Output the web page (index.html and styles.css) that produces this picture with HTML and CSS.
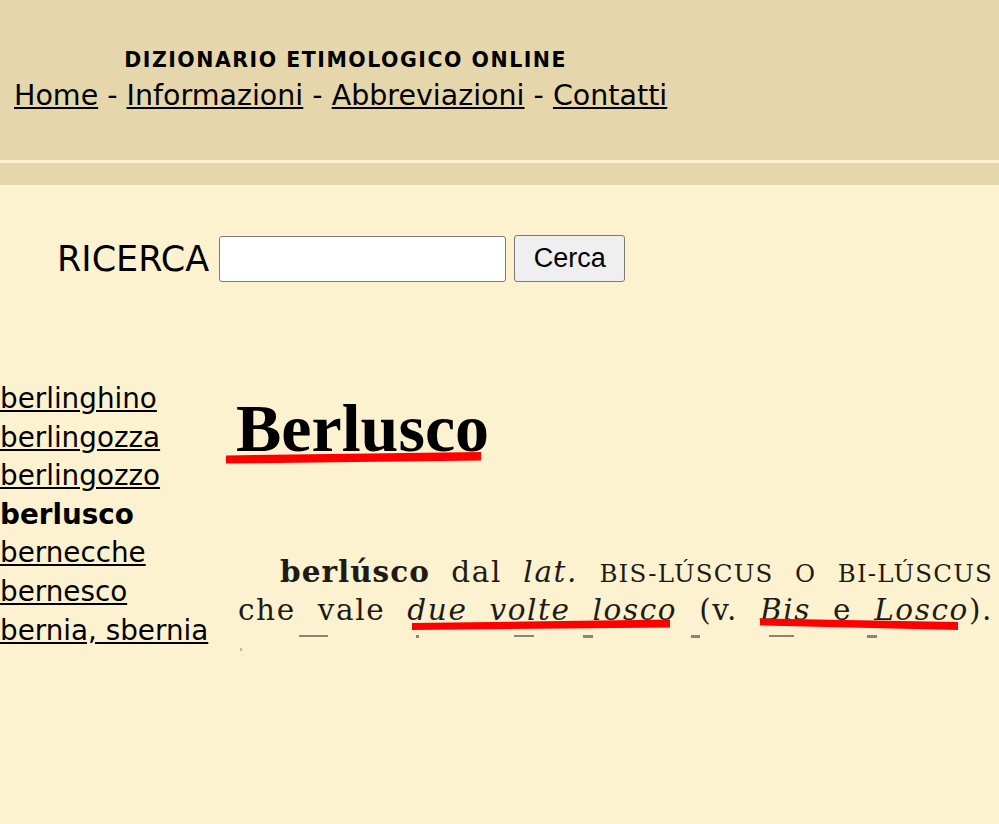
FILE: index.html
```html
<!DOCTYPE html>
<html lang="it">
<head>
<meta charset="utf-8">
<title>Dizionario Etimologico Online - Berlusco</title>
<link rel="stylesheet" href="styles.css">
</head>
<body>
<header class="top">
  <div class="top-inner">
    <div class="site-title">DIZIONARIO ETIMOLOGICO ONLINE</div>
    <nav class="nav"><a href="#">Home</a> - <a href="#">Informazioni</a> - <a href="#">Abbreviazioni</a> - <a href="#">Contatti</a></nav>
  </div>
</header>
<div class="sep"></div>
<div class="band"></div>
<main class="content">
  <form class="search" onsubmit="return false">
    <label class="search-label" for="q">RICERCA</label>
    <input class="search-input" id="q" type="text">
    <button class="search-btn" type="submit">Cerca</button>
  </form>
  <div class="entry">
    <aside class="side">
      <a href="#">berlinghino</a>
      <a href="#">berlingozza</a>
      <a href="#">berlingozzo</a>
      <b class="current">berlusco</b>
      <a href="#">bernecche</a>
      <a href="#">bernesco</a>
      <a href="#">bernia, sbernia</a>
    </aside>
    <section class="def">
      <h1 class="headword">Berlusco</h1>
      <div class="scan">
        <div class="line l1"><b>berlúsco</b> dal <i>lat.</i> <span class="sc">BIS-LÚSCUS</span> <span class="sc">O</span> <span class="sc">BI-LÚSCUS</span></div>
        <div class="line">che vale <i>due volte losco</i> (v. <i>Bis</i> e <i>Losco</i>).</div>
        <div class="frags" aria-hidden="true">
          <span class="frag f1"></span>
          <span class="frag f2"></span>
          <span class="frag f3"></span>
          <span class="frag f4"></span>
          <span class="frag f5"></span>
          <span class="frag f6"></span>
          <span class="frag f7"></span>
        </div>
        <div class="speck" aria-hidden="true"></div>
      </div>
      <svg class="marks" viewBox="0 0 773 280" width="773" height="280" aria-hidden="true">
        <polygon points="0,75.5 255,72 255,80.5 0,83.5" fill="#f00"/>
        <polygon points="186,243 444,239.5 444,247.5 186,250" fill="#f00"/>
        <polygon points="534,238.5 732,242 732,250 534,245.5" fill="#f00"/>
      </svg>
    </section>
  </div>
</main>
</body>
</html>
```
FILE: styles.css
```css
html, body {
  margin: 0;
  padding: 0;
}
body {
  background: #fdf2cf;
  font-family: "DejaVu Sans", Verdana, sans-serif;
  color: #000;
  min-height: 824px;
}
a {
  color: #000;
}
.top {
  background: #e5d7ab;
  height: 160px;
  box-sizing: border-box;
  padding-top: 48px;
}
.top-inner {
  display: inline-flex;
  flex-direction: column;
  align-items: center;
  gap: 8px;
  margin-left: 14px;
}
.site-title {
  font-weight: bold;
  font-size: 20.5px;
  line-height: 24px;
  letter-spacing: 1.5px;
  margin-left: 10px;
}
.nav {
  font-size: 28.5px;
  line-height: 32px;
}
.sep {
  height: 3px;
  background: #fdf1cd;
}
.band {
  height: 22px;
  background: #e5d7ab;
}
.content {
  background: #fdf2cf;
}
.search {
  display: flex;
  align-items: center;
  padding: 50px 0 0 57px;
  margin: 0;
}
.search-label {
  font-size: 35px;
  margin-right: 10px;
}
.search-input {
  box-sizing: border-box;
  width: 287px;
  height: 46px;
  border: 1px solid #7a7a7a;
  border-radius: 3px;
  background: #fff;
  margin: 0;
}
.search-btn {
  box-sizing: border-box;
  width: 111px;
  height: 47px;
  margin: 0 0 0 8px;
  border: 1px solid #7a7a7a;
  border-radius: 3px;
  background: #efefef;
  font-family: "Liberation Sans", Arial, sans-serif;
  font-size: 27px;
  color: #000;
  padding: 0;
}
.entry {
  display: flex;
  margin-top: 98px;
}
.side {
  width: 226px;
  flex: none;
  display: flex;
  flex-direction: column;
  align-items: flex-start;
  font-size: 27.8px;
  line-height: 38.6px;
}
.current {
  font-weight: bold;
}
.def {
  position: relative;
  flex: 1;
}
.headword {
  margin: 14px 0 0 10px;
  font-family: "Liberation Serif", "Times New Roman", serif;
  font-weight: bold;
  font-size: 68px;
  line-height: 68px;
}
.scan {
  position: relative;
  margin: 92px 0 0 12px;
  width: 755px;
  font-family: "DejaVu Serif", Georgia, serif;
  font-size: 29.5px;
  line-height: 36px;
  letter-spacing: 1.6px;
  color: #1e1b16;
}
.line {
  text-align: justify;
  text-align-last: justify;
  white-space: nowrap;
}
.l1 {
  padding-left: 42px;
}
.l1 b {
  letter-spacing: 1px;
}
.sc {
  font-size: 24.5px;
  letter-spacing: 1.2px;
}
.frags {
  display: flex;
  align-items: flex-start;
  height: 10px;
  padding-top: 7px;
}
.frag {
  display: block;
  height: 2px;
  background: #8c8474;
}
.f1 { margin-left: 61px; width: 29px; }
.f2 { margin-left: 88px; width: 3px; height: 3px; }
.f3 { margin-left: 95px; width: 20px; }
.f4 { margin-left: 49px; width: 10px; height: 3px; }
.f5 { margin-left: 98px; width: 9px; height: 3px; }
.f6 { margin-left: 69px; width: 25px; }
.f7 { margin-left: 73px; width: 10px; height: 3px; }
.speck {
  width: 2px;
  height: 3px;
  margin: 3px 0 0 2px;
  background: #c4b89f;
}
.marks {
  position: absolute;
  left: 0;
  top: 0;
  pointer-events: none;
}
```
